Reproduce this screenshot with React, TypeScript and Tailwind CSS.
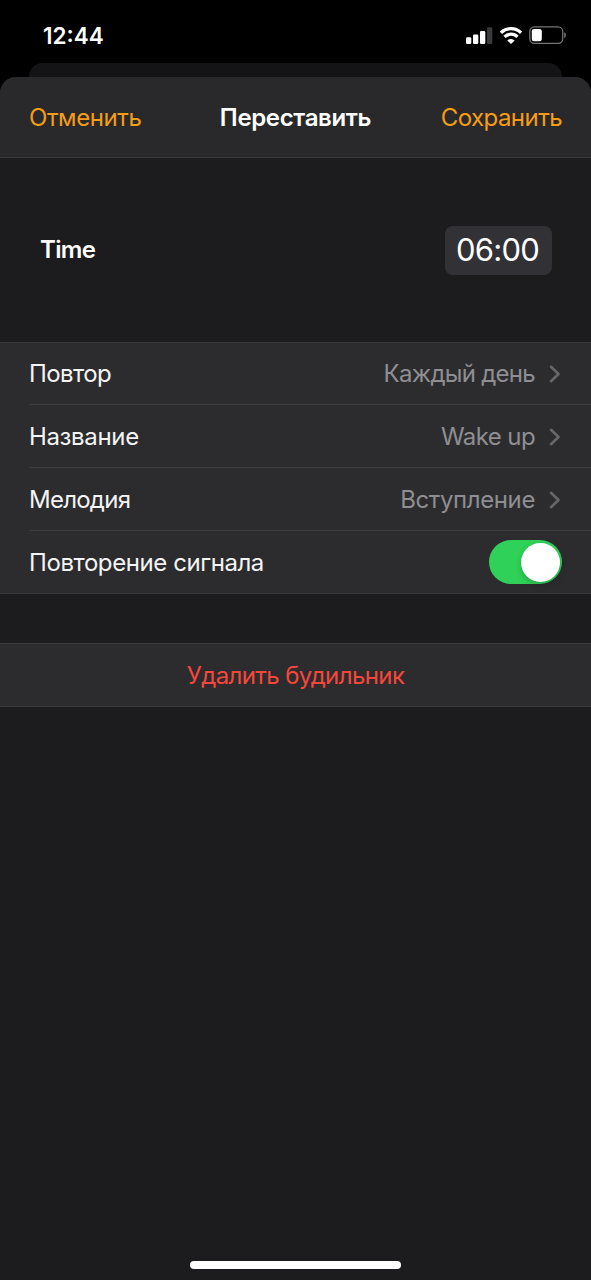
import { useState } from 'react';
import clsx from 'clsx';

interface SettingRowProps {
    label: string;
    value: string;
    labelClass: string;
    valueClass: string;
    rowClass: string;
}

const SETTINGS: SettingRowProps[] = [
    { label: 'Повтор', value: 'Каждый день', labelClass: 'tracking-[-0.6px]', valueClass: 'tracking-[-0.72px]', rowClass: 'h-[62px]' },
    { label: 'Название', value: 'Wake up', labelClass: 'tracking-[-0.35px]', valueClass: 'tracking-[-0.6px]', rowClass: 'h-[63px]' },
    { label: 'Мелодия', value: 'Вступление', labelClass: 'tracking-[-0.75px]', valueClass: 'tracking-[-0.4px]', rowClass: 'h-[63px]' },
];

function StatusBar() {
    return (
        <div className="flex h-[63px] items-start justify-between pl-[43px] pr-[24px] text-white">
            <span className="mt-[23px] text-[22.5px] leading-[26px] font-semibold">12:44</span>
            <div className="mt-[26px] flex items-start">
                <svg className="mr-[7px]" width="27" height="18" viewBox="0 0 27 18" fill="currentColor">
                    <rect x="0" y="11.2" width="5.3" height="6.8" rx="1.3" />
                    <rect x="7" y="8.5" width="5.3" height="9.5" rx="1.3" />
                    <rect x="14" y="5" width="5.3" height="13" rx="1.3" />
                    <rect x="21" y="1.3" width="5.3" height="16.7" rx="1.3" fill="#3a3a3c" />
                </svg>
                <svg className="mr-[7px]" width="22" height="18" viewBox="0 0 22 18" fill="none" stroke="currentColor" strokeWidth="3.3">
                    <path d="M.9 6.7a14.6 14.6 0 0 1 20.2 0" />
                    <path d="M4.5 10.9a9.2 9.2 0 0 1 13 0" />
                    <path d="M11 18l-3.7-3.6a5.3 5.3 0 0 1 7.4 0z" fill="currentColor" stroke="none" />
                </svg>
                <svg width="38" height="18" viewBox="0 0 38 18">
                    <rect x="0.8" y="0.9" width="32.9" height="16.4" rx="4.6" fill="none" stroke="#747474" strokeWidth="1.3" />
                    <rect x="2.8" y="3" width="10" height="12.3" rx="2.3" fill="#fff" />
                    <path d="M35.2 6.3c2.3.8 2.3 4.8 0 5.6z" fill="#747474" />
                </svg>
            </div>
        </div>
    );
}

function SettingRow({ label, value, labelClass, valueClass, rowClass }: SettingRowProps) {
    return (
        <div className={clsx('ml-[29px] flex items-center border-b border-[#3d3d41] pt-px pr-[30px]', rowClass)}>
            <span className={clsx('text-[#f4f4f5]', labelClass)}>{label}</span>
            <span className={clsx('ml-auto text-[#8e8e93]', valueClass)}>{value}</span>
            <svg className="ml-[14px]" width="12" height="18" viewBox="0 0 12 18" fill="none" stroke="#67676b" strokeWidth="2.6" strokeLinecap="round" strokeLinejoin="round">
                <path d="M2 1.8L9.5 9L2 16.2" />
            </svg>
        </div>
    );
}

export default function App() {
    const [snooze, setSnooze] = useState(true);

    return (
        <div className="flex h-[1280px] w-[591px] flex-col overflow-hidden bg-black font-['Inter','Liberation_Sans',sans-serif] text-[24px] leading-[30px]">
            <StatusBar />
            <div className="mx-[29px] h-[34px] shrink-0 rounded-t-[14px] bg-[#141416]" />

            <div className="-mt-[20px] flex flex-1 flex-col rounded-t-[16px] bg-[#1c1c1e]">
                <header className="grid h-[81px] grid-cols-[1fr_auto_1fr] items-center rounded-t-[16px] border-b border-[#39393b] bg-[#29292b] px-[29px] pt-[2px]">
                    <button className="text-left tracking-[-0.4px] text-[#f79d14]">Отменить</button>
                    <h1 className="font-semibold tracking-[-0.35px] text-white">Переставить</h1>
                    <button className="text-right tracking-[-0.55px] text-[#f79d14]">Сохранить</button>
                </header>

                <div className="flex h-[184px] items-center justify-between pr-[39px] pl-[40px] text-white">
                    <span className="font-semibold tracking-[-0.7px]">Time</span>
                    <span className="flex h-[49px] w-[107px] items-center justify-center rounded-[8px] bg-[#323236] pr-[2px] text-[31px] tracking-[-0.8px]">06:00</span>
                </div>

                <div className="border-y border-[#39393b] bg-[#2c2c2e]">
                    {SETTINGS.map((row) => (
                        <SettingRow key={row.label} {...row} />
                    ))}
                    <div className="ml-[29px] flex h-[62px] items-center justify-between pr-[29px]">
                        <span className="pt-[2px] tracking-[-0.42px] text-[#f4f4f5]">Повторение сигнала</span>
                        <button
                            role="switch"
                            aria-checked={snooze}
                            onClick={() => setSnooze(!snooze)}
                            className={clsx('flex h-[44px] w-[73px] items-center rounded-full px-[2px]', snooze ? 'justify-end bg-[#30d158]' : 'justify-start bg-[#39393d]')}
                        >
                            <span className="size-[39px] rounded-full bg-white shadow-[0_3px_6px_rgba(0,0,0,0.2)]" />
                        </button>
                    </div>
                </div>

                <button className="mt-[49px] flex h-[64px] items-center justify-center border-y border-[#39393b] bg-[#2c2c2e] pt-[2px] tracking-[-0.6px] text-[#f5473c]">
                    Удалить будильник
                </button>

                <div className="mx-auto mt-auto mb-[11px] h-[8px] w-[211px] rounded-full bg-white" />
            </div>
        </div>
    );
}
